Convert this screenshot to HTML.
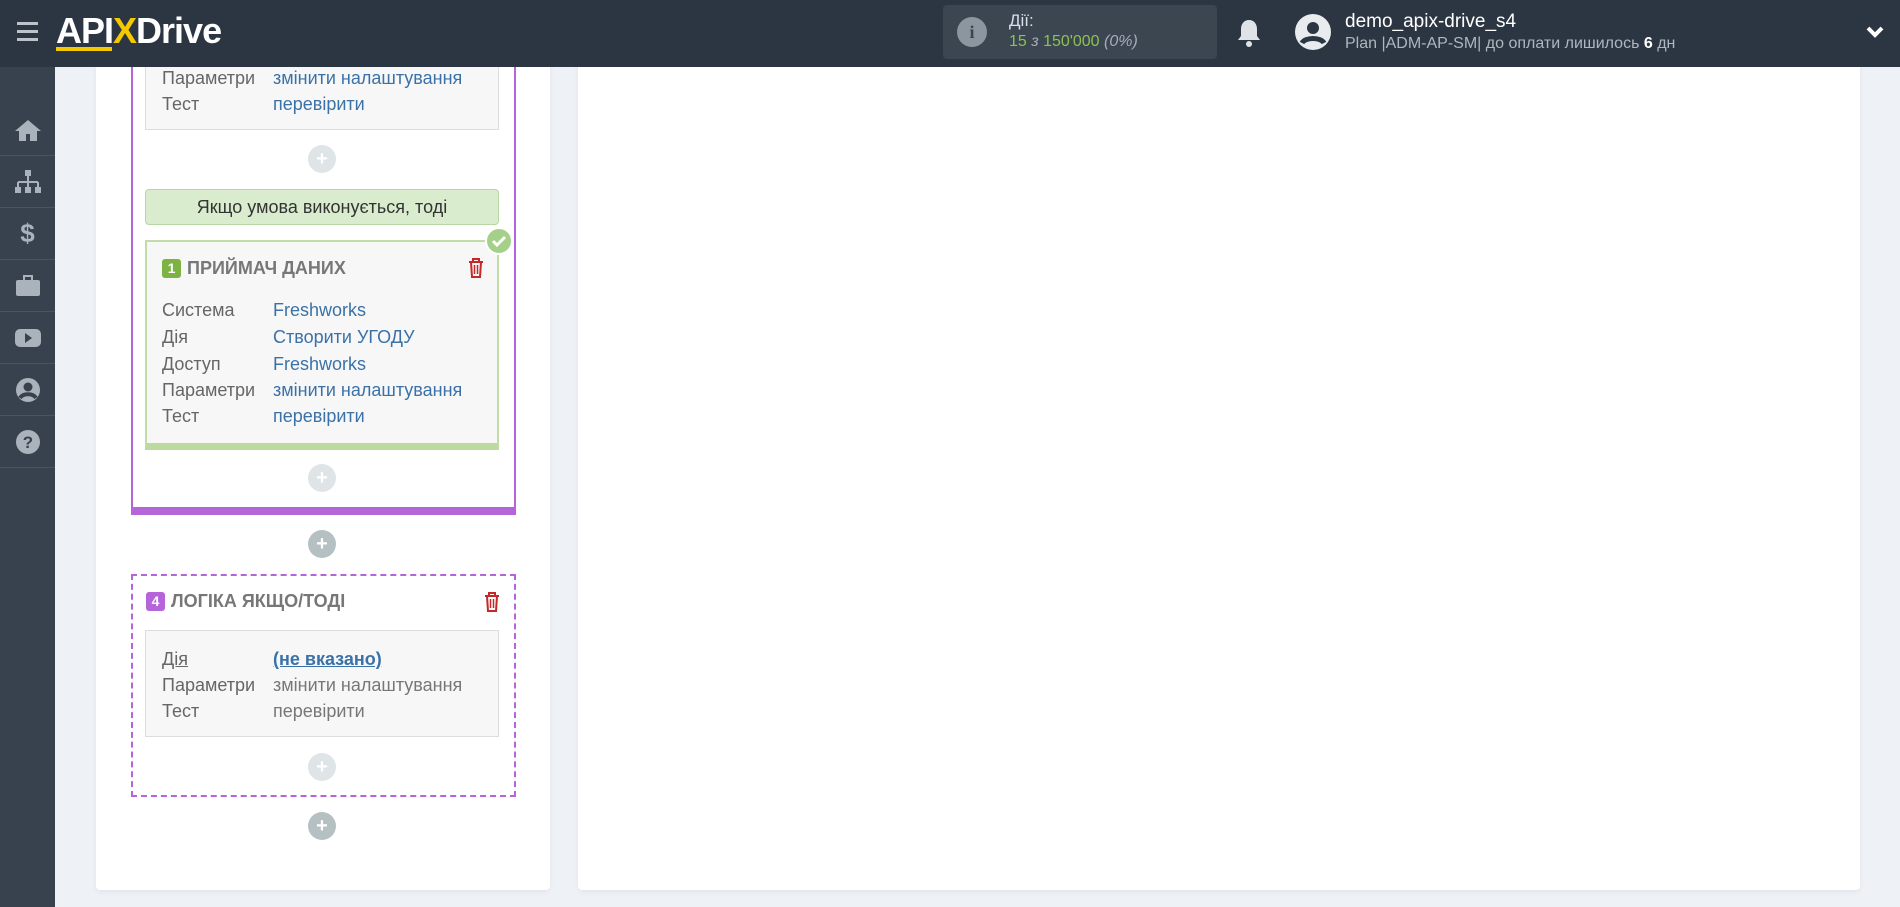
<!DOCTYPE html><html><head><meta charset="utf-8"><style>
*{box-sizing:border-box;margin:0;padding:0}
body{width:1900px;height:907px;overflow:hidden;background:#eef2f7;font-family:"Liberation Sans","DejaVu Sans",sans-serif;position:relative}
.hdr{position:absolute;left:0;top:0;width:1900px;height:67px;background:#2c3643;z-index:10}
.side{position:absolute;left:0;top:67px;width:55px;height:840px;background:#37424e}
.sic{position:absolute;left:0;width:55px;height:52px;border-bottom:1px solid #4a5561;display:flex;align-items:center;justify-content:center}
.panel{position:absolute;background:#fff;border-radius:4px;box-shadow:0 2px 6px rgba(0,0,0,.06)}
.a{position:absolute}
.row{position:absolute;left:162px;font-size:18px;color:#666}
.row span{position:absolute;left:111px;white-space:nowrap;color:#3a72a8}
.plus{position:absolute;width:28px;height:28px;border-radius:50%;background:#dfe4e6;color:#fff;font-size:20px;line-height:28px;text-align:center;font-weight:bold}
.plus.d{background:#b5c0c2}
.ttl{position:absolute;font-size:18px;font-weight:bold;color:#777;white-space:nowrap}
.badge{display:inline-block;width:19px;height:19px;border-radius:3px;color:#fff;font-size:14px;text-align:center;line-height:19px;margin-right:6px;vertical-align:1px}
</style></head><body>
<div class="hdr">
 <div class="a" style="left:17px;top:22px;width:21px;height:3px;background:#bcc3ca;box-shadow:0 8px 0 #bcc3ca,0 16px 0 #bcc3ca"></div>
 <div class="a" style="left:56px;top:10px;font-size:36px;font-weight:bold;color:#fff;letter-spacing:-1px">API<span style="color:#f5c800">X</span>Drive</div>
 <div class="a" style="left:56px;top:47px;width:56px;height:4px;background:#f5c800"></div>
 <div class="a" style="left:943px;top:5px;width:274px;height:54px;background:#3b4650;border-radius:4px">
  <div class="a" style="left:14px;top:12px;width:30px;height:30px;border-radius:50%;background:#8c969f;color:#3b4650;font-weight:bold;text-align:center;line-height:30px;font-size:18px;font-family:'Liberation Serif',serif">i</div>
  <div class="a" style="left:66px;top:6px;color:#dde;font-size:17px">Дії:</div>
  <div class="a" style="left:66px;top:28px;font-size:16px;color:#8cc152">15 <i style="color:#aab">з</i> 150'000 <i style="color:#aab">(0%)</i></div>
 </div>
 <svg class="a" style="left:1236px;top:18px" width="26" height="30" viewBox="0 0 26 30"><path d="M13 2c-5 0-8 4-8 9v7l-3 4h22l-3-4v-7c0-5-3-9-8-9z" fill="#dfe3e8"/><circle cx="13" cy="26" r="3" fill="#dfe3e8"/></svg>
 <svg class="a" style="left:1295px;top:14px" width="36" height="36" viewBox="0 0 36 36"><circle cx="18" cy="18" r="18" fill="#e9ecef"/><circle cx="18" cy="14" r="6" fill="#2c3643"/><path d="M7 29c3-6 19-6 22 0" stroke="#2c3643" stroke-width="5" fill="none"/></svg>
 <div class="a" style="left:1345px;top:11px;color:#fff;font-size:19px">demo_apix-drive_s4</div>
 <div class="a" style="left:1345px;top:35px;color:#aeb6be;font-size:16px">Plan |ADM-AP-SM| до оплати лишилось <b style="color:#fff">6</b> дн</div>
 <svg class="a" style="left:1866px;top:26px" width="18" height="12" viewBox="0 0 18 12"><path d="M2 2l7 7 7-7" stroke="#fff" stroke-width="4" fill="none"/></svg>
</div>
<div class="side">
 <div class="sic" style="top:37px"><svg width="28" height="24" viewBox="0 0 28 24"><path d="M14 2L1 13h4v10h7v-7h4v7h7V13h4z" fill="#aab3bc"/></svg></div>
 <div class="sic" style="top:89px"><svg width="28" height="26" viewBox="0 0 28 26"><rect x="11" y="1" width="6" height="6" fill="#aab3bc"/><path d="M14 7v6M4 13h20M4 13v5M14 13v5M24 13v5" stroke="#aab3bc" stroke-width="2"/><rect x="1" y="18" width="6" height="6" fill="#aab3bc"/><rect x="11" y="18" width="6" height="6" fill="#aab3bc"/><rect x="21" y="18" width="6" height="6" fill="#aab3bc"/></svg></div>
 <div class="sic" style="top:141px;color:#aab3bc;font-size:26px;font-weight:bold">$</div>
 <div class="sic" style="top:193px"><svg width="26" height="22" viewBox="0 0 26 22"><rect x="1" y="5" width="24" height="16" rx="2" fill="#aab3bc"/><rect x="9" y="1" width="8" height="5" fill="none" stroke="#aab3bc" stroke-width="2"/></svg></div>
 <div class="sic" style="top:245px"><svg width="26" height="20" viewBox="0 0 26 20"><rect x="0" y="1" width="26" height="18" rx="5" fill="#aab3bc"/><path d="M10 5l7 5-7 5z" fill="#37424e"/></svg></div>
 <div class="sic" style="top:297px"><svg width="26" height="26" viewBox="0 0 26 26"><circle cx="13" cy="13" r="12" fill="#aab3bc"/><circle cx="13" cy="10" r="4.5" fill="#37424e"/><path d="M5 21c3-5 13-5 16 0" stroke="#37424e" stroke-width="4" fill="none"/></svg></div>
 <div class="sic" style="top:349px"><svg width="26" height="26" viewBox="0 0 26 26"><circle cx="13" cy="13" r="12" fill="#aab3bc"/><text x="13" y="19" font-size="17" font-weight="bold" text-anchor="middle" fill="#37424e" font-family="Liberation Sans">?</text></svg></div>
</div>
<div class="panel" style="left:96px;top:50px;width:454px;height:840px"></div>
<div class="panel" style="left:578px;top:50px;width:1282px;height:840px"></div>
<!-- purple box -->
<div class="a" style="left:131px;top:60px;width:385px;height:455px;border:2px solid #b565d9;border-top:none;border-bottom:8px solid #b565d9"></div>
<div class="a" style="left:145px;top:60px;width:354px;height:70px;background:#f7f7f7;border:1px solid #ddd;border-top:none"></div>
<div class="row" style="top:68px">Параметри<span>змінити налаштування</span></div>
<div class="row" style="top:94px">Тест<span>перевірити</span></div>
<div class="plus" style="left:308px;top:145px">+</div>
<div class="a" style="left:145px;top:189px;width:354px;height:36px;background:#d9ecce;border:1px solid #b8d7a5;border-radius:4px;text-align:center;line-height:34px;font-size:18px;color:#333">Якщо умова виконується, тоді</div>
<div class="a" style="left:145px;top:240px;width:354px;height:210px;background:#f7f7f7;border:2px solid #c2dca9;border-bottom:7px solid #bcd9a0"></div>
<div class="a" style="left:485px;top:227px;width:28px;height:28px;border-radius:50%;background:#a5d08a;border:2px solid #fff"><svg width="24" height="24" viewBox="0 0 24 24"><path d="M6 12l4 4 8-8" stroke="#fff" stroke-width="3" fill="none"/></svg></div>
<div class="ttl" style="left:162px;top:258px"><span class="badge" style="background:#7cb342">1</span>ПРИЙМАЧ ДАНИХ</div>
<svg class="a" style="left:468px;top:258px" width="16" height="20" viewBox="0 0 16 20"><path d="M1 4h14M5 4V1h6v3M3 4l1 15h8l1-15" stroke="#c62828" stroke-width="2" fill="none"/><path d="M6.5 7v9M9.5 7v9" stroke="#c62828" stroke-width="1.5"/></svg>
<div class="row" style="top:300px">Система<span>Freshworks</span></div>
<div class="row" style="top:327px">Дія<span>Створити УГОДУ</span></div>
<div class="row" style="top:354px">Доступ<span>Freshworks</span></div>
<div class="row" style="top:380px">Параметри<span>змінити налаштування</span></div>
<div class="row" style="top:406px">Тест<span>перевірити</span></div>
<div class="plus" style="left:308px;top:464px">+</div>
<div class="plus d" style="left:308px;top:530px">+</div>
<!-- dashed -->
<div class="a" style="left:131px;top:574px;width:385px;height:223px;border:2px dashed #b565d9"></div>
<div class="ttl" style="left:146px;top:591px"><span class="badge" style="background:#b565d9">4</span>ЛОГІКА ЯКЩО/ТОДІ</div>
<svg class="a" style="left:484px;top:592px" width="16" height="20" viewBox="0 0 16 20"><path d="M1 4h14M5 4V1h6v3M3 4l1 15h8l1-15" stroke="#c62828" stroke-width="2" fill="none"/><path d="M6.5 7v9M9.5 7v9" stroke="#c62828" stroke-width="1.5"/></svg>
<div class="a" style="left:145px;top:630px;width:354px;height:107px;background:#f7f7f7;border:1px solid #ddd"></div>
<div class="row" style="top:649px;text-decoration:underline">Дія<span style="font-weight:bold;text-decoration:underline">(не вказано)</span></div>
<div class="row" style="top:675px">Параметри<span style="color:#777">змінити налаштування</span></div>
<div class="row" style="top:701px">Тест<span style="color:#777">перевірити</span></div>
<div class="plus" style="left:308px;top:753px">+</div>
<div class="plus d" style="left:308px;top:812px">+</div>
</body></html>
